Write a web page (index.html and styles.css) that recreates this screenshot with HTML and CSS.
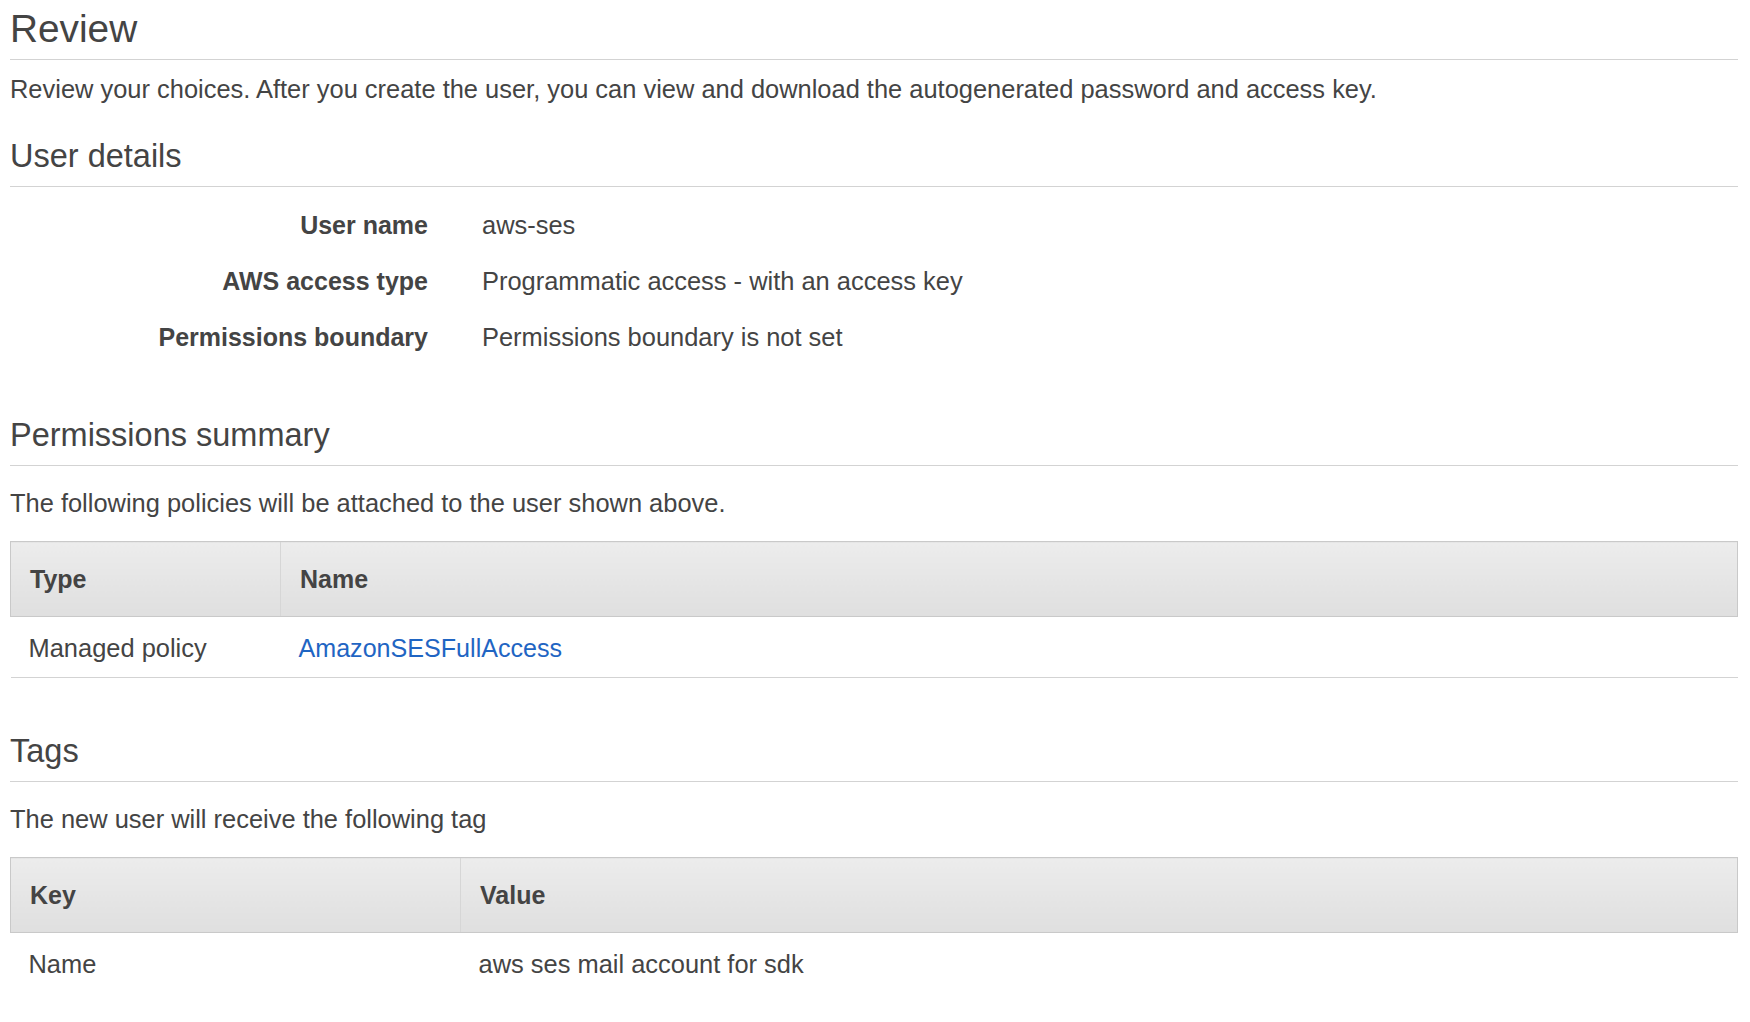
FILE: index.html
```html
<!DOCTYPE html>
<html lang="en">
<head>
<meta charset="utf-8">
<title>Review</title>
<link rel="stylesheet" href="styles.css">
</head>
<body>
<main class="page">
  <h1 class="title">Review</h1>
  <p class="intro">Review your choices. After you create the user, you can view and download the autogenerated password and access key.</p>

  <section class="section">
    <h2 class="section-title">User details</h2>
    <dl class="details">
      <dt>User name</dt><dd>aws-ses</dd>
      <dt>AWS access type</dt><dd>Programmatic access - with an access key</dd>
      <dt>Permissions boundary</dt><dd>Permissions boundary is not set</dd>
    </dl>
  </section>

  <section class="section section-perm">
    <h2 class="section-title">Permissions summary</h2>
    <p class="desc">The following policies will be attached to the user shown above.</p>
    <table class="grid grid-policies">
      <thead>
        <tr><th class="col-first">Type</th><th>Name</th></tr>
      </thead>
      <tbody>
        <tr><td>Managed policy</td><td><a class="link" href="#">AmazonSESFullAccess</a></td></tr>
      </tbody>
    </table>
  </section>

  <section class="section section-tags">
    <h2 class="section-title">Tags</h2>
    <p class="desc">The new user will receive the following tag</p>
    <table class="grid grid-tags last">
      <thead>
        <tr><th class="col-first">Key</th><th>Value</th></tr>
      </thead>
      <tbody>
        <tr><td>Name</td><td>aws ses mail account for sdk</td></tr>
      </tbody>
    </table>
  </section>
</main>
</body>
</html>
```
FILE: styles.css
```css
html, body {
  margin: 0;
  padding: 0;
  background: #ffffff;
}

body {
  font-family: "Liberation Sans", Arial, Helvetica, sans-serif;
  color: #444444;
  font-size: 25.45px;
}

.page {
  padding: 7px 12px 0 10px;
}

.title {
  margin: 0;
  font-size: 38.8px;
  font-weight: normal;
  line-height: 44px;
  padding-bottom: 8px;
  border-bottom: 1px solid #d3d3d3;
}

.intro {
  margin: 14px 0 0;
  line-height: 30px;
}

.section-title {
  margin: 0;
  font-size: 32.5px;
  font-weight: normal;
  line-height: 40px;
  padding-bottom: 10px;
  border-bottom: 1px solid #d3d3d3;
}

.section {
  margin-top: 32px;
}

.section-perm {
  margin-top: 50px;
}

.section-tags {
  margin-top: 53px;
}

.details {
  margin: 10px 0 0;
  display: grid;
  grid-template-columns: 418px 1fr;
  column-gap: 54px;
}

.details dt {
  font-weight: bold;
  font-size: 25px;
  text-align: right;
  line-height: 56px;
}

.details dd {
  margin: 0;
  line-height: 56px;
}

.desc {
  margin: 22px 0 23px;
  line-height: 30px;
}

.grid {
  width: 100%;
  border-collapse: collapse;
  table-layout: fixed;
}

.grid th {
  height: 74px;
  padding: 0 19px;
  text-align: left;
  font-weight: bold;
  font-size: 25px;
  background: linear-gradient(#ececec, #dfdfdf);
  border-top: 1px solid #c9c9c9;
  border-bottom: 1px solid #c9c9c9;
  border-left: 1px solid #d6d6d6;
  line-height: 30px;
}

.grid th:first-child {
  border-left: 1px solid #c9c9c9;
}

.grid th:last-child {
  border-right: 1px solid #c9c9c9;
}

.grid td {
  height: 59px;
  padding: 1px 18px 0;
  border-bottom: 1px solid #d3d3d3;
  line-height: 30px;
}

.grid.last td {
  border-bottom: none;
}

.grid-policies .col-first {
  width: 231px;
}

.grid-tags .col-first {
  width: 411px;
}

.link {
  color: #1f65c3;
  text-decoration: none;
  font-size: 25.1px;
}
```
